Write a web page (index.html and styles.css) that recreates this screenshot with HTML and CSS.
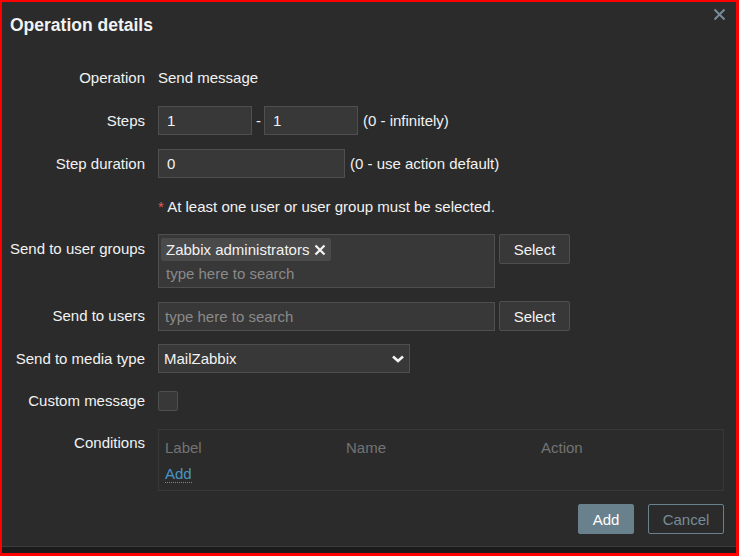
FILE: index.html
```html
<!DOCTYPE html>
<html lang="en">
<head>
  <meta charset="utf-8">
  <title>Operation details</title>
  <link rel="stylesheet" href="styles.css">
</head>
<body>
<div class="frame">
<div class="dialog">
  <div class="dialog-head">
    <h2>Operation details</h2>
    <button type="button" class="btn-close" title="Close">
      <svg width="13" height="13" viewBox="0 0 13 13"><path d="M1.5 1.5l10 10M11.5 1.5l-10 10" stroke="currentColor" stroke-width="2" fill="none"/></svg>
    </button>
  </div>

  <form class="form-list">
    <div class="row">
      <label>Operation</label>
      <div class="field"><span class="text">Send message</span></div>
    </div>

    <div class="row">
      <label>Steps</label>
      <div class="field">
        <input type="text" class="w-94" value="1">
        <span class="dash">-</span>
        <input type="text" class="w-94" value="1">
        <span class="hint">(0 - infinitely)</span>
      </div>
    </div>

    <div class="row">
      <label>Step duration</label>
      <div class="field">
        <input type="text" class="w-187" value="0">
        <span class="hint">(0 - use action default)</span>
      </div>
    </div>

    <div class="row">
      <label></label>
      <div class="field"><span class="text"><span class="req">*</span> At least one user or user group must be selected.</span></div>
    </div>

    <div class="row groups-row">
      <label>Send to user groups</label>
      <div class="field top">
        <div class="multiselect">
          <div class="tags">
            <span class="tag">Zabbix administrators
              <svg width="12" height="12" viewBox="0 0 12 12"><path d="M1.5 1.5l9 9M10.5 1.5l-9 9" stroke="#f2f2f2" stroke-width="2.3" fill="none"/></svg>
            </span>
          </div>
          <input type="text" class="ms-input" placeholder="type here to search">
        </div>
        <button type="button" class="btn-alt">Select</button>
      </div>
    </div>

    <div class="row users-row">
      <label>Send to users</label>
      <div class="field">
        <div class="multiselect single">
          <input type="text" class="ms-input" placeholder="type here to search">
        </div>
        <button type="button" class="btn-alt">Select</button>
      </div>
    </div>

    <div class="row media-row">
      <label>Send to media type</label>
      <div class="field">
        <div class="z-select">
          <span>MailZabbix</span>
          <svg width="14" height="10" viewBox="0 0 14 10"><path d="M2 2.5l5 4.5 5-4.5" stroke="#f2f2f2" stroke-width="2.6" fill="none"/></svg>
        </div>
      </div>
    </div>

    <div class="row custom-row">
      <label>Custom message</label>
      <div class="field"><span class="checkbox"></span></div>
    </div>

    <div class="row cond-row">
      <label>Conditions</label>
      <div class="field">
        <div class="table-box">
          <table>
            <thead>
              <tr><th class="c-label">Label</th><th class="c-name">Name</th><th>Action</th></tr>
            </thead>
            <tbody>
              <tr><td colspan="3"><a href="#" class="link-action">Add</a></td></tr>
            </tbody>
          </table>
        </div>
      </div>
    </div>
  </form>

  <div class="dialog-foot">
    <button type="button" class="btn-add">Add</button>
    <button type="button" class="btn-cancel">Cancel</button>
  </div>
</div>
</div>
</body>
</html>
```

FILE: styles.css
```css
body {
  margin: 0;
  font-family: "Liberation Sans", Arial, sans-serif;
  font-size: 15px;
  color: #f2f2f2;
  background: #161616;
}
.frame {
  width: 739px;
  height: 556px;
  box-sizing: border-box;
  border: 2px solid #ff0000;
  border-bottom-width: 3px;
  border-right-width: 3px;
  background: #1b1b1b;
}
.dialog {
  height: 545px;
  box-sizing: border-box;
  background: #2b2b2b;
  border-bottom: 1px solid #3b3b3b;
  padding: 0 12px 0 8px;
  position: relative;
}
.dialog-head {
  height: 61px;
}
.dialog-head h2 {
  margin: 0;
  padding-top: 13px;
  font-size: 17.5px;
  font-weight: 700;
  color: #f2f2f2;
}
.btn-close {
  position: absolute;
  top: 4px;
  right: 8px;
  padding: 2px;
  border: 0;
  background: none;
  color: #768d99;
  line-height: 0;
}

.form-list {
  display: flex;
  flex-direction: column;
  gap: 14px;
}
.row {
  display: flex;
  gap: 13px;
}
.row > label {
  width: 135px;
  flex: none;
  text-align: right;
  white-space: nowrap;
  line-height: 29px;
}
.groups-row,
.users-row,
.media-row,
.custom-row {
  margin-top: -1px;
}
.field {
  display: flex;
  align-items: center;
  min-height: 29px;
  gap: 5px;
  flex: 1;
}
.field.top {
  align-items: flex-start;
}
.text {
  line-height: 29px;
}
.req {
  color: #e45959;
}
input {
  font-family: inherit;
  font-size: 15px;
  color: #f2f2f2;
  background: #383838;
  border: 1px solid #4f4f4f;
  height: 29px;
  box-sizing: border-box;
  padding: 0 8px;
  outline: none;
}
.w-94 { width: 94px; }
.w-187 { width: 187px; }
.dash {
  margin: 0 -1px 0 -1px;
}
.dash + input {
  margin-left: -1px;
}
.multiselect {
  width: 337px;
  box-sizing: border-box;
  background: #383838;
  border: 1px solid #4f4f4f;
  min-height: 54px;
  padding: 3px 2px 0;
}
.multiselect.single {
  min-height: 29px;
  padding: 0;
}
.multiselect + .btn-alt {
  margin-left: -1px;
}
.tags {
  display: flex;
}
.tag {
  display: inline-flex;
  align-items: center;
  gap: 5px;
  height: 23px;
  padding: 0 5px;
  background: #4a4a4a;
  border-radius: 2px;
  white-space: nowrap;
}
.ms-input {
  display: block;
  width: 100%;
  border: 0;
  background: transparent;
  height: 25px;
  padding: 0 5px;
}
.multiselect.single .ms-input {
  height: 27px;
  padding: 0 6px;
}
::placeholder {
  color: #8a8a8a;
  opacity: 1;
}
.btn-alt {
  font-family: inherit;
  font-size: 15px;
  color: #f2f2f2;
  background: #383838;
  border: 1px solid #4f4f4f;
  border-radius: 2px;
  height: 30px;
  width: 71px;
  padding: 0;
}
.z-select {
  width: 252px;
  height: 29px;
  box-sizing: border-box;
  background: #383838;
  border: 1px solid #4f4f4f;
  display: flex;
  align-items: center;
  justify-content: space-between;
  padding: 0 4px 0 5px;
}
.checkbox {
  width: 20px;
  height: 20px;
  box-sizing: border-box;
  background: #383838;
  border: 1px solid #4f4f4f;
  border-radius: 2px;
}
.cond-row > label {
  line-height: 28px;
}
.table-box {
  flex: 1;
  height: 62px;
  box-sizing: border-box;
  border: 1px solid #383838;
  padding: 4px 6px 0;
}
table {
  border-collapse: collapse;
  width: 100%;
}
th {
  font-weight: 400;
  color: #737373;
  text-align: left;
  padding: 0;
  height: 26px;
}
th.c-label { width: 181px; }
th.c-name { width: 195px; }
td {
  padding: 0;
  height: 26px;
}
.link-action {
  color: #4796c4;
  text-decoration: none;
  border-bottom: 1px dotted #4796c4;
}
.dialog-foot {
  display: flex;
  justify-content: flex-end;
  gap: 14px;
  margin-top: 13px;
}
.btn-add {
  font-family: inherit;
  font-size: 15px;
  width: 56px;
  height: 30px;
  color: #fff;
  background: #69808d;
  border: 1px solid #69808d;
  border-radius: 2px;
}
.btn-cancel {
  font-family: inherit;
  font-size: 15px;
  width: 76px;
  height: 30px;
  color: #768d99;
  background: transparent;
  border: 1px solid #69808d;
  border-radius: 2px;
}
```
